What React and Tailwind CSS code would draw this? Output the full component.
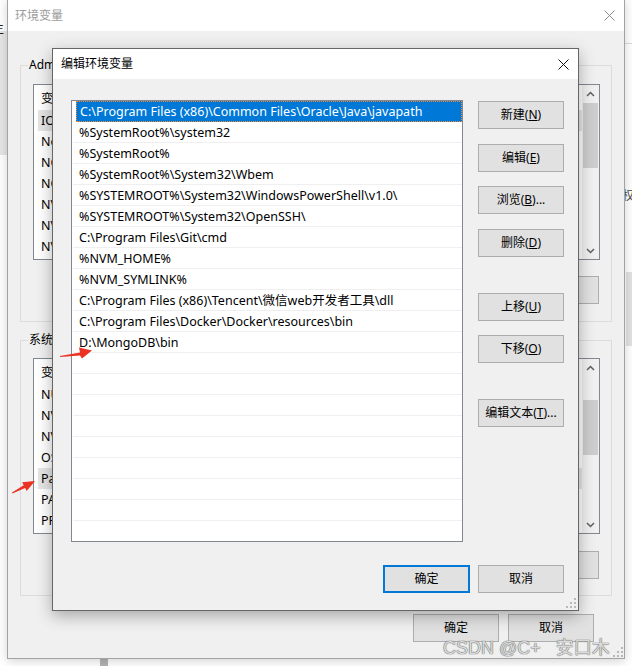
import React from 'react'

const FONT = "font-['Noto_Sans','Noto_Sans_CJK_SC',sans-serif]"

const PATHS = [
  'C:\\Program Files (x86)\\Common Files\\Oracle\\Java\\javapath',
  '%SystemRoot%\\system32',
  '%SystemRoot%',
  '%SystemRoot%\\System32\\Wbem',
  '%SYSTEMROOT%\\System32\\WindowsPowerShell\\v1.0\\',
  '%SYSTEMROOT%\\System32\\OpenSSH\\',
  'C:\\Program Files\\Git\\cmd',
  '%NVM_HOME%',
  '%NVM_SYMLINK%',
  'C:\\Program Files (x86)\\Tencent\\微信web开发者工具\\dll',
  'C:\\Program Files\\Docker\\Docker\\resources\\bin',
  'D:\\MongoDB\\bin',
  '', '', '', '', '', '', '', '', '',
]

const USER_VARS = ['IOT_HOME', 'NoDefaultCurrentDirectoryInExePath', 'NODE_HOME', 'NODE_PATH', 'NVM_HOME', 'NVM_SYMLINK', 'NVM_NODEJS']
const SYS_VARS = ['NUMBER_OF_PROCESSORS', 'NVM_HOME', 'NVM_SYMLINK', 'OS', 'Path', 'PATHEXT', 'PROCESSOR_ARCHITECTURE']

function Btn({ children, className = '' }) {
  return (
    <div className={`flex h-[28px] w-[86px] shrink-0 items-center justify-center border border-[#adadad] bg-[#e1e1e1] text-[12px] text-black ${className}`}>
      {children}
    </div>
  )
}

function CloseX({ color }) {
  return (
    <svg width="11" height="11" viewBox="0 0 11 11">
      <path d="M0.5 0.5 L10.5 10.5 M10.5 0.5 L0.5 10.5" stroke={color} strokeWidth="1" />
    </svg>
  )
}

function Chevron({ up }) {
  return (
    <svg width="9" height="6" viewBox="0 0 9 6">
      <path d={up ? 'M1 5 L4.5 1.5 L8 5' : 'M1 1 L4.5 4.5 L8 1'} stroke="#606060" strokeWidth="1.5" fill="none" />
    </svg>
  )
}

function Grip() {
  return (
    <svg width="10" height="10" viewBox="0 0 10 10" fill="#b9b9b9">
      <rect x="8" y="0" width="2" height="2" />
      <rect x="8" y="4" width="2" height="2" />
      <rect x="4" y="4" width="2" height="2" />
      <rect x="8" y="8" width="2" height="2" />
      <rect x="4" y="8" width="2" height="2" />
      <rect x="0" y="8" width="2" height="2" />
    </svg>
  )
}

function VarList({ rows, sel, thumb, className = '' }) {
  return (
    <div className={`flex h-[176px] w-[567px] border border-[#828790] bg-white ${className}`}>
      <div className="flex-1 overflow-hidden text-[12.5px] leading-[22px] text-black">
        <div className="h-[25px] pl-[7px] pt-[3px]">变量</div>
        {rows.map((r, i) => (
          <div key={i} className={i === sel ? 'ml-[4px] h-[21px] bg-[#e5e5e5] pl-[3px]' : 'h-[21px] pl-[7px]'}>
            {r}
          </div>
        ))}
      </div>
      <div className="flex w-[17px] flex-col bg-[#f0f0f0]">
        <div className="flex h-[17px] items-center justify-center"><Chevron up /></div>
        <div className="flex-1">
          <div className={`mx-px bg-[#cdcdcd] ${thumb}`} />
        </div>
        <div className="flex h-[17px] items-center justify-center"><Chevron /></div>
      </div>
    </div>
  )
}

function EnvWindow() {
  return (
    <div className="absolute left-[7px] top-[-1px] flex h-[660px] w-[618px] flex-col border border-[#a3a3a3] bg-[#f0f0f0] shadow-[0_2px_10px_rgba(0,0,0,0.18)]">
      <div className="flex h-[31px] shrink-0 items-center justify-between bg-white pl-[7px] pr-[9px] text-[12px] text-[#9b9b9b]">
        <span>环境变量</span>
        <CloseX color="#8c8c8c" />
      </div>
      <div className="flex flex-col pl-[12px]">
        <fieldset className="mt-[26px] w-[592px] border border-[#dcdcdc] pb-[17px]">
          <legend className="ml-[7px] px-px text-[12px] leading-[16px] text-black">Administrator 的用户变量</legend>
          <VarList rows={USER_VARS} sel={0} thumb="mt-[1px] h-[65px]" className="ml-[12px] mt-[11px]" />
          <div className="mr-[12px] mt-[16px] flex justify-end gap-[9px]">
            <Btn>新建(<u>N</u>)...</Btn>
            <Btn>编辑(<u>E</u>)...</Btn>
            <Btn>删除(<u>D</u>)</Btn>
          </div>
        </fieldset>
        <fieldset className="mt-[10px] w-[592px] border border-[#dcdcdc] pb-[16px]">
          <legend className="ml-[7px] px-px text-[12px] leading-[16px] text-black">系统变量(<u>S</u>)</legend>
          <VarList rows={SYS_VARS} sel={4} thumb="mt-[24px] h-[55px]" className="ml-[12px] mt-[10px]" />
          <div className="mr-[12px] mt-[17px] flex justify-end gap-[9px]">
            <Btn>新建(<u>W</u>)...</Btn>
            <Btn>编辑(<u>I</u>)...</Btn>
            <Btn>删除(<u>L</u>)</Btn>
          </div>
        </fieldset>
        <div className="mt-[18px] flex justify-end gap-[9px] pr-[30px]">
          <Btn>确定</Btn>
          <Btn>取消</Btn>
        </div>
      </div>
      <div className="absolute bottom-[1px] right-[1px]"><Grip /></div>
    </div>
  )
}

function EditDialog() {
  return (
    <div className="absolute left-[52px] top-[48px] flex h-[563px] w-[527px] flex-col border border-[#666666] bg-[#f0f0f0] shadow-[0_5px_15px_rgba(0,0,0,0.3)]">
      <div className="flex h-[30px] shrink-0 items-center justify-between bg-white pl-[8px] pr-[9px] text-[12px] text-black">
        <span>编辑环境变量</span>
        <CloseX color="#111111" />
      </div>
      <div className="flex pl-[18px] pt-[21px]">
        <div className="h-[442px] w-[392px] overflow-hidden border border-[#828790] bg-white text-[12.5px] leading-[22px]">
          {PATHS.map((p, i) =>
            i === 0 ? (
              <div key={i} className="ml-[4px] h-[21px] overflow-hidden whitespace-nowrap border border-dotted border-[#ff8a2a] bg-[#0078d7] pl-[3px] leading-[20px] text-white">
                {p}
              </div>
            ) : (
              <div key={i} className="ml-px h-[21px] overflow-hidden whitespace-nowrap border-b border-[#efefef] pl-[6px] text-black">
                {p}
              </div>
            )
          )}
        </div>
        <div className="ml-[15px] flex w-[86px] flex-col">
          <Btn className="mt-[1px]">新建(<u>N</u>)</Btn>
          <Btn className="mt-[15px]">编辑(<u>E</u>)</Btn>
          <Btn className="mt-[14px]">浏览(<u>B</u>)...</Btn>
          <Btn className="mt-[15px]">删除(<u>D</u>)</Btn>
          <Btn className="mt-[36px]">上移(<u>U</u>)</Btn>
          <Btn className="mt-[14px]">下移(<u>O</u>)</Btn>
          <Btn className="mt-[36px]">编辑文本(<u>T</u>)...</Btn>
        </div>
      </div>
      <div className="mt-[23px] flex justify-end gap-[8px] pr-[14px]">
        <div className="flex h-[28px] w-[87px] items-center justify-center border-2 border-[#0078d7] bg-[#e1e1e1] text-[12px] text-black">确定</div>
        <Btn>取消</Btn>
      </div>
      <div className="absolute bottom-[2px] right-[2px]"><Grip /></div>
    </div>
  )
}

export default function App() {
  return (
    <div className={`relative h-[666px] w-[632px] overflow-hidden bg-white ${FONT}`}>
      <div className="absolute left-0 top-[31px] h-[124px] w-[8px] bg-[#e6e6e6]" />
      <div className="absolute left-[-8px] top-[22px] text-[12px] leading-[14px] text-[#222222]">主</div>
      <div className="absolute left-[625px] top-[43px] h-px w-[10px] bg-[#dcdcdc]" />
      <div className="absolute left-[622px] top-[188px] text-[12px] leading-[16px] text-[#444444]">权</div>
      <div className="absolute left-[626px] top-[272px] h-[74px] w-[6px] bg-[#e2e2e2]" />
      <div className="absolute left-[100px] top-[658px] h-[8px] w-[8px] bg-[#b3b3b3]" />

      <EnvWindow />
      <EditDialog />

      <svg className="absolute left-[58px] top-[344px]" width="36" height="16" viewBox="0 0 36 16">
        <polygon points="2,12 22,8.5 21,3.5 34,6.5 24,14.5 22,11.5 2,13" fill="#ea3323" />
      </svg>
      <svg className="absolute left-[8px] top-[476px]" width="30" height="20" viewBox="0 0 30 20">
        <polygon points="4,16.6 15.7,9.3 14.1,6.2 27,5 18.7,15 17.1,11.9 4.4,17.4" fill="#ea3323" />
      </svg>

      <div className="absolute left-[443px] top-[636px] whitespace-pre font-['Liberation_Sans','Noto_Sans_CJK_SC',sans-serif] text-[18px] leading-[24px] text-[#dadada] [text-shadow:0_0_1px_#5e5e5e,0_0_1px_#5e5e5e]">
        {'CSDN @C+   安口木'}
      </div>
    </div>
  )
}
